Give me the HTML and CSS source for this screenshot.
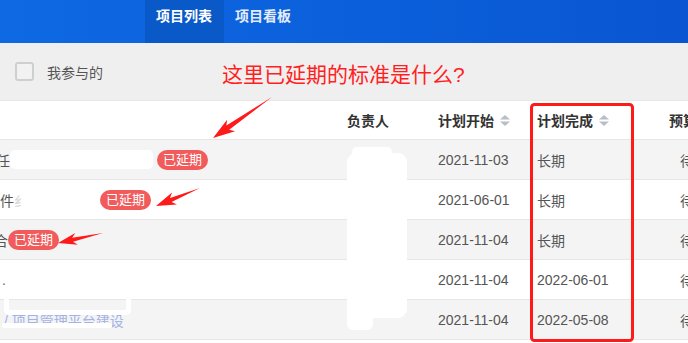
FILE: index.html
```html
<!DOCTYPE html>
<html lang="zh">
<head>
<meta charset="utf-8">
<title>项目列表</title>
<link rel="stylesheet" href="styles.css">
</head>
<body>
<div class="page">
  <header class="topbar">
    <div class="brand"></div>
    <nav class="tabs">
      <a class="tab active">项目列表</a>
      <a class="tab">项目看板</a>
    </nav>
  </header>

  <div class="filter">
    <label class="check"><span class="box"></span><span>我参与的</span></label>
  </div>

  <div class="table">
    <div class="row thead">
      <div class="cell name"></div>
      <div class="cell">负责人</div>
      <div class="cell">计划开始<svg class="sort" viewBox="0 0 10 11" width="10" height="11"><polygon points="0,4.5 5,0 10,4.5"/><polygon points="0,6.5 10,6.5 5,11"/></svg></div>
      <div class="cell">计划完成<svg class="sort" viewBox="0 0 10 11" width="10" height="11"><polygon points="0,4.5 5,0 10,4.5"/><polygon points="0,6.5 10,6.5 5,11"/></svg></div>
      <div class="cell">预算</div>
    </div>

    <div class="row odd">
      <div class="cell name"><span class="cut c1">任</span><span class="redact"></span><span class="badge b1">已延期</span></div>
      <div class="cell"></div>
      <div class="cell">2021-11-03</div>
      <div class="cell">长期</div>
      <div class="cell last">待审批</div>
    </div>
    <div class="row">
      <div class="cell name"><span class="cut">件</span><span class="ghost">纟</span><span class="badge">已延期</span></div>
      <div class="cell"></div>
      <div class="cell">2021-06-01</div>
      <div class="cell">长期</div>
      <div class="cell last">待审批</div>
    </div>
    <div class="row odd">
      <div class="cell name"><span class="cut c3">合</span><span class="badge b3">已延期</span></div>
      <div class="cell"></div>
      <div class="cell">2021-11-04</div>
      <div class="cell">长期</div>
      <div class="cell last">待审批</div>
    </div>
    <div class="row">
      <div class="cell name"><span class="dot">.</span></div>
      <div class="cell"></div>
      <div class="cell">2021-11-04</div>
      <div class="cell">2022-06-01</div>
      <div class="cell last">待审批</div>
    </div>
    <div class="row odd">
      <div class="cell name"><span class="link">/ 项目管理平台建设</span></div>
      <div class="cell"></div>
      <div class="cell">2021-11-04</div>
      <div class="cell">2022-05-08</div>
      <div class="cell last">待审批</div>
    </div>
  </div>

  <!-- redaction marks -->
  <div class="mask m1"></div>
  <div class="mask m2"></div>
  <div class="mask m3"></div>
  <div class="mask m4"></div>
  <div class="mask m5"></div>

  <!-- annotation layer -->
  <div class="note">这里已延期的标准是什么?</div>
  <svg class="annot" width="688" height="343" viewBox="0 0 688 343">
    <rect x="531.5" y="104.5" width="101" height="236" rx="3" ry="3" fill="none" stroke="#ff1a1a" stroke-width="3"/>
    <polygon points="272,97 229.2,129.8 235.1,131.2 213,138 227.1,119.7 226.4,125.6" fill="#ff1a1a"/>
    <polygon points="200,188 171.6,201.9 177,204.4 156,206 172,192.4 170,197.9" fill="#ff1a1a"/>
    <polygon points="103,233 73,241.7 77.8,244.7 58,243 75.2,233 72.2,237.8" fill="#ff1a1a"/>
  </svg>
</div>
</body>
</html>
```

FILE: styles.css
```css
* { box-sizing: border-box; }
html, body { margin: 0; padding: 0; }
body {
  width: 688px;
  height: 343px;
  overflow: hidden;
  background: #fff;
  font-family: "Liberation Sans", "Noto Sans CJK SC", sans-serif;
  font-size: 14px;
  color: #555;
}
.page { position: relative; width: 688px; height: 343px; overflow: hidden; }

.topbar {
  height: 43px;
  display: flex;
  background: linear-gradient(90deg, #0e69e2 0%, #0b5ed9 60%, #0a55d2 100%);
}
.brand { width: 145px; }
.tabs { display: flex; }
.tab {
  height: 43px;
  padding: 0 12px 0 11px;
  line-height: 32px;
  font-weight: bold;
  font-size: 14px;
  color: #e4ecfb;
}
.tab.active { background: #0a59c9; color: #fff; }

.filter {
  height: 57px;
  background: #efefef;
  display: flex;
  align-items: center;
  padding-left: 15px;
}
.check { display: flex; align-items: center; gap: 13px; color: #555; }
.box {
  width: 19px; height: 19px;
  border: 2px solid #cfcfcf;
  border-radius: 3px;
  background: #f2f2f2;
}

.table { background: #fff; }
.row {
  display: grid;
  grid-template-columns: 335px 91px 99px 132px 1fr;
  height: 40px;
  border-bottom: 1px solid #e6e6e6;
  align-items: center;
}
.row.odd { background: #f4f4f4; }
.thead {
  height: 40px;
  border-top: 1px solid #e8e8e8;
  font-weight: bold;
  color: #333;
}
.cell {
  padding-left: 12px;
  display: flex;
  align-items: center;
  white-space: nowrap;
  overflow: hidden;
}
.cell.name { padding-left: 0; }
.cell.last { padding-left: 23px; }
.sort { margin-left: 6px; fill: #b9bdc5; }

.cut { color: #555; }
.c1 { margin-left: -4px; }
.c3 { margin-left: -6px; }
.redact {
  width: 143px; height: 19px;
  background: #fff;
  border-radius: 5px;
  margin-left: 0;
}
.ghost { width: 86px; color: #d5d5d5; overflow: hidden; }
.badge {
  height: 20px;
  line-height: 20px;
  padding: 0 6px;
  border-radius: 10px;
  background: #f25b5b;
  color: #fff;
  font-size: 13px;
}
.b1 { margin-left: 4px; }
.b3 { margin-left: 0; }
.dot { margin-left: 2px; color: #667; }
.link { margin-left: 4px; color: #a3b2e6; }

.mask { position: absolute; background: #fff; }
.m1 { left: 347px; top: 153px; width: 60px; height: 165px; border-radius: 9px; }
.m2 { left: 347px; top: 300px; width: 26px; height: 30px; border-radius: 6px; }
.m3 { left: 4px; top: 299px; width: 127px; height: 16px; border: 5px solid #fff; border-top: 0; background: transparent; border-radius: 0 0 5px 5px; }
.m4 { left: 2px; top: 323px; width: 110px; height: 5px; border-radius: 3px; }
.m5 { left: 352px; top: 147px; width: 40px; height: 10px; border-radius: 5px; }

.note {
  position: absolute;
  left: 222px;
  top: 62px;
  font-size: 21px;
  line-height: 26px;
  color: #ff1f1f;
  white-space: nowrap;
}
.annot { position: absolute; left: 0; top: 0; pointer-events: none; }
```
